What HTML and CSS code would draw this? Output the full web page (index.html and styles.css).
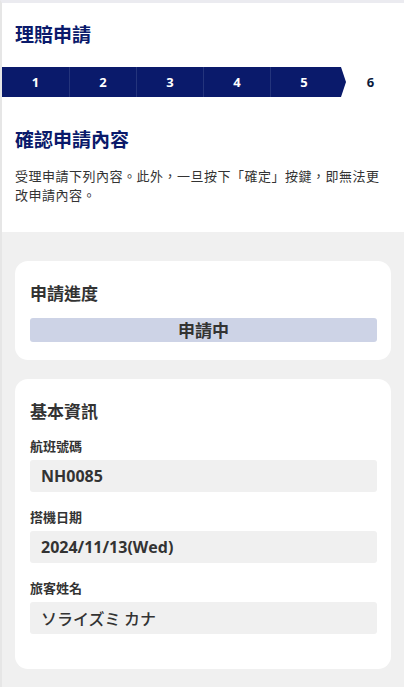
FILE: index.html
```html
<!DOCTYPE html>
<html lang="zh-Hant">
<head>
<meta charset="utf-8">
<link rel="stylesheet" href="styles.css">
</head>
<body>
<div class="page">
  <header class="top">
    <h1 class="title">理賠申請</h1>
    <ol class="steps">
      <li class="step done">1</li>
      <li class="step done">2</li>
      <li class="step done">3</li>
      <li class="step done">4</li>
      <li class="step done last">5<svg class="arrow" width="9" height="30" viewBox="0 0 9 30"><path d="M0 0 L4 0 L9 15 L4 30 L0 30 Z" fill="#0a1a6b"/></svg></li>
      <li class="step current">6</li>
    </ol>
    <section class="intro">
      <h2 class="subtitle">確認申請內容</h2>
      <p class="desc">受理申請下列內容。此外，一旦按下「確定」按鍵，即無法更改申請內容。</p>
    </section>
  </header>
  <main class="content">
    <section class="card">
      <h3 class="card-title">申請進度</h3>
      <div class="status">申請中</div>
    </section>
    <section class="card">
      <h3 class="card-title">基本資訊</h3>
      <div class="field">
        <div class="label">航班號碼</div>
        <div class="value">NH0085</div>
      </div>
      <div class="field">
        <div class="label">搭機日期</div>
        <div class="value">2024/11/13(Wed)</div>
      </div>
      <div class="field">
        <div class="label">旅客姓名</div>
        <div class="value kana">ソライズミ カナ</div>
      </div>
    </section>
  </main>
</div>
</body>
</html>
```

FILE: styles.css
```css
* { box-sizing: border-box; }
html, body { margin: 0; padding: 0; }
body {
  background: #f0f0f0;
  font-family: "Noto Sans", "Noto Sans CJK TC", sans-serif;
  color: #333;
}
.page {
  border-top: 3px solid #ebebf0;
  border-left: 2px solid #e6e6e6;
  min-height: 687px;
}
.top {
  background: #fff;
  padding-top: 16px;
}
.title {
  margin: 0 0 0 13px;
  font-size: 19px;
  line-height: 30px;
  font-weight: 700;
  color: #0a1a6b;
  font-family: "Noto Sans CJK TC", sans-serif;
}
.steps {
  list-style: none;
  margin: 18px 0 0 0;
  padding: 0;
  display: grid;
  grid-template-columns: repeat(6, 1fr);
  height: 30px;
}
.step {
  position: relative;
  display: flex;
  align-items: center;
  justify-content: center;
  font-size: 13px;
  font-weight: 700;
  font-family: "Open Sans", sans-serif;
}
.step.done {
  background: #0a1a6b;
  color: #fff;
  border-left: 1px solid #24347c;
}
.step.done:first-child { border-left: none; }
.step.current { color: #0a1a3b; }
.arrow {
  position: absolute;
  right: -9px;
  top: 0;
}
.intro {
  padding: 28px 14px 28px 13px;
}
.subtitle {
  margin: 0;
  font-size: 19px;
  line-height: 28px;
  font-weight: 700;
  color: #0a1a6b;
  font-family: "Noto Sans CJK TC", sans-serif;
}
.desc {
  margin: 13px 0 0 0;
  font-size: 13px;
  line-height: 19px;
  letter-spacing: 0.5px;
  color: #333;
  font-family: "Noto Sans CJK TC", sans-serif;
}
.content {
  padding: 29px 13px 18px 13px;
  display: flex;
  flex-direction: column;
  gap: 19px;
}
.card {
  background: #fff;
  border-radius: 13px;
  padding: 19px 14px 35px 15px;
}
.card:first-child { padding-bottom: 18px; }
.card-title {
  margin: 0;
  font-size: 17px;
  line-height: 26px;
  font-weight: 700;
  color: #333;
  font-family: "Noto Sans CJK TC", sans-serif;
}
.status {
  margin-top: 12px;
  background: #cdd3e6;
  border-radius: 3px;
  height: 24px;
  line-height: 24px;
  text-align: center;
  font-size: 17px;
  font-weight: 700;
  color: #333;
  font-family: "Noto Sans CJK TC", sans-serif;
}
.field { margin-top: 15px; }
.card-title + .field { margin-top: 12px; }
.label {
  font-size: 13px;
  line-height: 20px;
  font-weight: 700;
  color: #333;
  font-family: "Noto Sans CJK TC", sans-serif;
}
.value {
  margin-top: 4px;
  background: #f0f0f0;
  border-radius: 3px;
  height: 32px;
  line-height: 32px;
  padding-left: 11px;
  font-size: 16px;
  font-weight: 700;
  color: #333;
  font-family: "Open Sans", "Noto Sans CJK TC", sans-serif;
}
.value.kana {
  font-weight: 500;
  font-family: "Noto Sans CJK JP", sans-serif;
}
```
